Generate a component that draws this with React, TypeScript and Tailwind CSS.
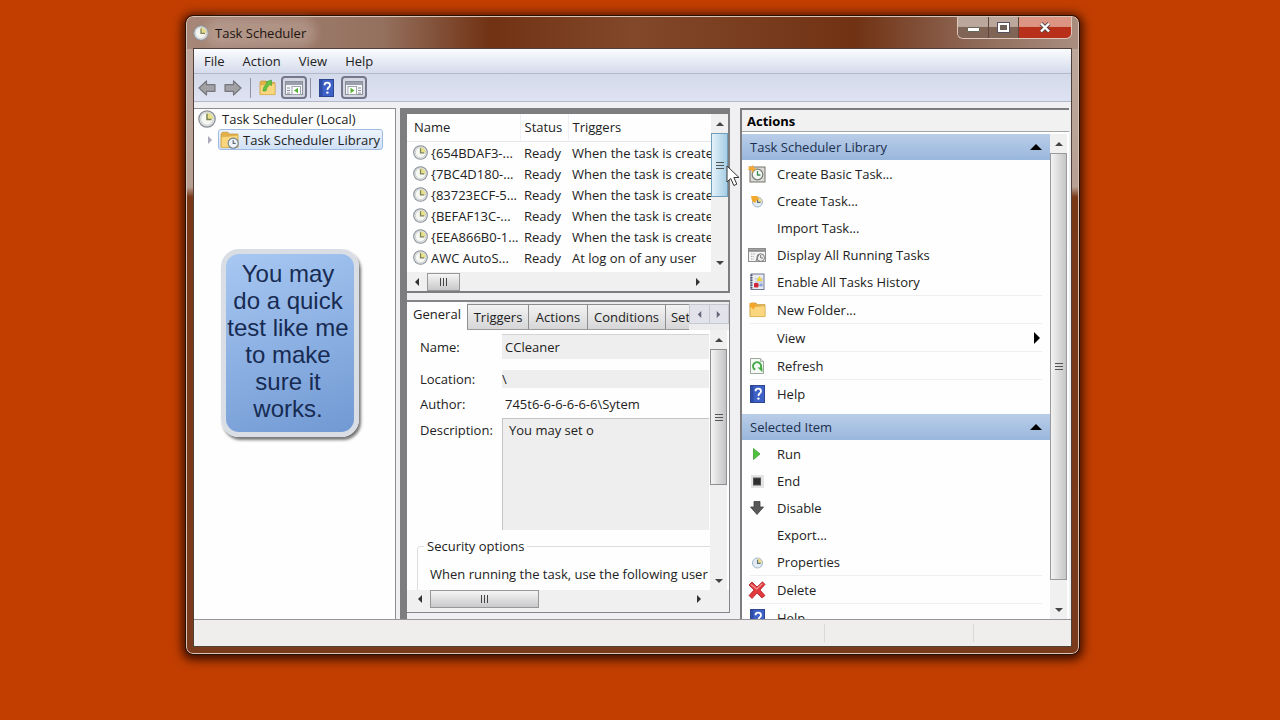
import React from "react";

type IconProps = { className?: string };

function ClockIcon({ className = "size-4" }: IconProps) {
  return (
    <svg viewBox="0 0 16 16" className={className} aria-hidden="true">
      <circle cx="8" cy="8" r="7.3" fill="#dfe3e6" stroke="#8a8f94" strokeWidth="1.1" />
      <circle cx="8" cy="8" r="5.5" fill="#f7f8f2" stroke="#bcc3c8" strokeWidth="0.6" />
      <path d="M8 8V2.5A5.5 5.5 0 0 1 13.5 8Z" fill="#e8e08a" />
      <path d="M8 3.4V8.4H12" fill="none" stroke="#7b8256" strokeWidth="1.3" />
    </svg>
  );
}

function SmallClockIcon({ className = "size-4", star = false }: IconProps & { star?: boolean }) {
  return (
    <svg viewBox="0 0 16 16" className={className} aria-hidden="true">
      <circle cx="8.5" cy="9" r="5" fill="#e3ecf5" stroke="#9fb2c6" />
      <path d="M8.5 9V4.6A4.4 4.4 0 0 1 12.9 9Z" fill="#eedb83" />
      <path d="M8.5 5.8V9.4H11.6" fill="none" stroke="#5c6f86" strokeWidth="1.1" />
      {star && <path d="M2 3h6l2 3-2 1-2 3-3-2Z" fill="#f2a92c" />}
    </svg>
  );
}

function BasicTaskIcon() {
  return (
    <svg viewBox="0 0 18 18" className="size-[18px]" aria-hidden="true">
      <rect x="2" y="2" width="15" height="15" fill="#dcdad5" stroke="#77736d" />
      <circle cx="9.5" cy="9.5" r="5.3" fill="#f4f7f4" stroke="#777f7c" strokeWidth="1.2" />
      <path d="M9.5 6V10H12.4" fill="none" stroke="#3f8c57" strokeWidth="1.3" />
      <path d="M0 1l3 1 2-2 1 3 3 1-3 1-1 3-2-3-3 0 1-2Z" fill="#f3a833" />
    </svg>
  );
}

function RunningTasksIcon() {
  return (
    <svg viewBox="0 0 18 16" className="h-4 w-[18px]" aria-hidden="true">
      <rect x="0.5" y="1.5" width="17" height="13" fill="#f4f4f4" stroke="#8d8d8d" />
      <path d="M1 3.5H17" stroke="#8d8d8d" strokeWidth="2.6" />
      <path d="M3 7h4M3 9.5h3M3 12h3" stroke="#aaa" strokeDasharray="1.4 1" />
      <circle cx="12.7" cy="10.6" r="3.8" fill="#f0f0f0" stroke="#777" />
      <path d="M12.7 8V11H15M8 14l3-7" fill="none" stroke="#777" />
    </svg>
  );
}

function HistoryIcon() {
  return (
    <svg viewBox="0 0 16 18" className="h-[18px] w-4" aria-hidden="true">
      <rect x="2" y="1" width="13" height="15.5" fill="#e9ebf3" stroke="#6f7793" />
      <path d="M2.5 1.5V16" stroke="#515873" strokeWidth="2" strokeDasharray="1.5 1" />
      <path d="M6 6h8M6 9h8M6 12h8" stroke="#b3b9cc" />
      <path d="M10.5 3l3 5h-6Z" fill="#ecd52f" />
      <rect x="5" y="10" width="4.5" height="4.5" rx="1" fill="#cf2637" />
      <rect x="10.5" y="10.5" width="3" height="3" fill="#8ca3d9" />
    </svg>
  );
}

function FolderIcon({ className = "size-[17px]", up = false, clock = false, star = false }: IconProps & { up?: boolean; clock?: boolean; star?: boolean }) {
  return (
    <svg viewBox="0 0 17 17" className={className} aria-hidden="true">
      <path d="M1 3.5 2 2h5l1.2 1.6H16V15.5H1Z" fill="#e3b04a" stroke="#c99a3b" strokeWidth="0.7" />
      <path d="M1.200 6.200 16 4.600V15.600H1.200Z" fill="#fad77e" stroke="#d9ae4b" strokeWidth="0.6" />
      {up && <path d="M4 12C4.200 8.500 5.500 6 8 4.800L6.800 3 12.500 1 12.600 6.600 10.900 5.600C8.500 7.500 7.500 9 7 12Z" fill="#62c441" stroke="#3c9a2b" strokeWidth="0.6" />}
      {star && <path d="M0 2l3 1 1.500-2 1 2.500 3 1-3 1.500-1 3-2-3-2.500-.5 1-1.500Z" fill="#f6a623" />}
      {clock && (
        <g>
          <circle cx="11.800" cy="11.800" r="4.500" fill="#eef3f7" stroke="#71808f" />
          <path d="M11.800 9V12H14" fill="none" stroke="#5a6672" />
        </g>
      )}
    </svg>
  );
}

function HelpIcon() {
  return (
    <svg viewBox="0 0 15 18" className="h-[18px] w-[15px]" aria-hidden="true">
      <rect x="0.5" y="0.5" width="14" height="17" fill="#3d61c6" stroke="#2c478f" />
      <path d="M1 1h2.500v16H1Z" fill="#2e4da6" />
      <path d="M5.500 6.200C5.500 2.800 11 2.800 11 6.200 11 8.400 8.400 8.200 8.400 11" fill="none" stroke="#fff" strokeWidth="1.800" />
      <circle cx="8.400" cy="13.600" r="1.200" fill="#fff" />
    </svg>
  );
}

function RefreshIcon() {
  return (
    <svg viewBox="0 0 16 18" className="h-[18px] w-4" aria-hidden="true">
      <path d="M1.500 1.500H11.500L14.500 4.500V16.500H1.500Z" fill="#f6faf6" stroke="#9aa79b" />
      <path d="M11.500 1.500V4.500H14.500" fill="#dfe7df" stroke="#9aa79b" strokeWidth="0.800" />
      <path d="M6.200 12.700A4 4 0 1 1 11.600 11" fill="none" stroke="#45a945" strokeWidth="2" />
      <path d="M8.600 10.600H13.400V15.200Z" fill="#45a945" />
    </svg>
  );
}

function PaneIcon({ flip = false }: { flip?: boolean }) {
  return (
    <svg viewBox="0 0 20 18" className="h-[18px] w-5" aria-hidden="true">
      <rect x="1.500" y="2.500" width="17" height="13" fill="#f4f5f7" stroke="#8b909b" />
      <path d="M2 4.500H18" stroke="#9a9fab" strokeWidth="3" />
      {flip ? (
        <g>
          <rect x="4" y="7.500" width="8.500" height="8" fill="#fff" stroke="#a0a6ae" />
          <path d="M6.500 8.800L10.500 11.500L6.500 14.200Z" fill="#56b137" />
          <path d="M14 9h3M14 11.500h3M14 14h3" stroke="#8b909b" />
        </g>
      ) : (
        <g>
          <rect x="8" y="7.500" width="8.500" height="8" fill="#fff" stroke="#a0a6ae" />
          <path d="M14 8.800L10 11.500L14 14.200Z" fill="#56b137" />
          <path d="M3 9h3M3 11.500h3M3 14h3" stroke="#8b909b" />
        </g>
      )}
    </svg>
  );
}

function NavArrow({ right = false }: { right?: boolean }) {
  return (
    <svg viewBox="0 0 18 16" className="h-4 w-[18px]" aria-hidden="true">
      <path
        d={right ? "M17 8 9.500 1V4.700H1V11.300H9.500V15Z" : "M1 8 8.500 1V4.700H17V11.300H8.500V15Z"}
        fill="#a2a2a6"
        stroke="#77777c"
        strokeWidth="1.200"
        strokeLinejoin="round"
      />
    </svg>
  );
}

function RunIcon() {
  return (
    <svg viewBox="0 0 16 16" className="size-4" aria-hidden="true">
      <path d="M4.500 2.500 11 8 4.500 13.500Z" fill="#4fc23e" stroke="#3ba02d" strokeWidth="0.800" />
    </svg>
  );
}

function EndIcon() {
  return (
    <svg viewBox="0 0 16 16" className="size-4" aria-hidden="true">
      <rect x="2" y="2" width="13" height="13" fill="#e4e4e4" />
      <rect x="4.500" y="5" width="7" height="7" fill="#2f2f2f" stroke="#555" />
    </svg>
  );
}

function DisableIcon() {
  return (
    <svg viewBox="0 0 16 16" className="size-4" aria-hidden="true">
      <path d="M5 1.500h6v5.500h3.500L8 14.500 1.500 7H5Z" fill="#585858" stroke="#3f3f3f" strokeWidth="0.800" />
    </svg>
  );
}

function DeleteIcon() {
  return (
    <svg viewBox="0 0 18 18" className="size-[18px]" aria-hidden="true">
      <path d="M1 4 4 1 9 6 14.500 .8 17 3.500 12 9 17 14.500 14 17 9 12 4 17.500 1 14.500 6 9Z" fill="#e03a3f" stroke="#b41f28" strokeWidth="0.800" />
      <path d="M3 3.500 8.800 8 14.500 2.600" fill="none" stroke="#f59a95" strokeWidth="1.200" />
    </svg>
  );
}

type Direction = "up" | "down" | "left" | "right";

const TRIANGLES: Record<Direction, string> = {
  up: "M0 6 4 2 8 6Z",
  down: "M0 2 4 6 8 2Z",
  left: "M6 0 2 4 6 8Z",
  right: "M2 0 6 4 2 8Z",
};

function Triangle({ to, className = "size-2" }: { to: Direction; className?: string }) {
  return (
    <svg viewBox="0 0 8 8" className={className} fill="currentColor" aria-hidden="true">
      <path d={TRIANGLES[to]} />
    </svg>
  );
}

function VerticalScroll({ thumb, label }: { thumb: string; label: string }) {
  return (
    <div className="flex w-[17px] shrink-0 flex-col items-stretch bg-[#f0f0f1] text-[#444]">
      <button aria-label={`${label} up`} className="flex h-[19px] shrink-0 items-center justify-center">
        <Triangle to="up" />
      </button>
      <div className="min-h-0 flex-1">
        <div className={`flex flex-col items-center justify-center gap-[2px] border ${thumb}`}>
          <span className="h-px w-2 bg-[#555]" />
          <span className="h-px w-2 bg-[#555]" />
          <span className="h-px w-2 bg-[#555]" />
        </div>
      </div>
      <button aria-label={`${label} down`} className="flex h-[19px] shrink-0 items-center justify-center">
        <Triangle to="down" />
      </button>
    </div>
  );
}

function HorizontalScroll({ thumb, label }: { thumb: string; label: string }) {
  return (
    <div className="flex h-[18px] min-w-0 flex-1 items-stretch text-[#333]">
      <button aria-label={`${label} left`} className="flex w-5 items-center justify-center">
        <Triangle to="left" />
      </button>
      <div className="flex flex-1">
        <div className={`flex items-center justify-center gap-[2px] border border-[#979797] bg-linear-to-b from-[#f5f5f5] to-[#c9c9cb] ${thumb}`}>
          <span className="h-2 w-px bg-[#444]" />
          <span className="h-2 w-px bg-[#444]" />
          <span className="h-2 w-px bg-[#444]" />
        </div>
      </div>
      <button aria-label={`${label} right`} className="flex w-5 items-center justify-center">
        <Triangle to="right" />
      </button>
    </div>
  );
}

const TASKS = [
  ["{654BDAF3-...", "Ready", "When the task is create"],
  ["{7BC4D180-...", "Ready", "When the task is create"],
  ["{83723ECF-5...", "Ready", "When the task is create"],
  ["{BEFAF13C-...", "Ready", "When the task is create"],
  ["{EEA866B0-1...", "Ready", "When the task is create"],
  ["AWC AutoS...", "Ready", "At log on of any user"],
];

type Action = { label: string; icon?: React.ReactNode; divided?: boolean; submenu?: boolean };

const LIBRARY_ACTIONS: Action[] = [
  { label: "Create Basic Task...", icon: <BasicTaskIcon /> },
  { label: "Create Task...", icon: <SmallClockIcon star /> },
  { label: "Import Task..." },
  { label: "Display All Running Tasks", icon: <RunningTasksIcon /> },
  { label: "Enable All Tasks History", icon: <HistoryIcon /> },
  { label: "New Folder...", icon: <FolderIcon star />, divided: true },
  { label: "View", divided: true, submenu: true },
  { label: "Refresh", icon: <RefreshIcon />, divided: true },
  { label: "Help", icon: <HelpIcon />, divided: true },
];

const ITEM_ACTIONS: Action[] = [
  { label: "Run", icon: <RunIcon /> },
  { label: "End", icon: <EndIcon /> },
  { label: "Disable", icon: <DisableIcon /> },
  { label: "Export..." },
  { label: "Properties", icon: <SmallClockIcon /> },
  { label: "Delete", icon: <DeleteIcon />, divided: true },
  { label: "Help", icon: <HelpIcon />, divided: true },
];

function ActionGroup({ title, actions }: { title: string; actions: Action[] }) {
  return (
    <section className="shrink-0">
      <h3 className="flex h-[26px] items-center justify-between bg-linear-to-b from-[#b9cde8] to-[#99b7dc] px-2 text-[#1c2f4e]">
        {title}
        <Triangle to="up" className="size-3 text-black" />
      </h3>
      <ul>
        {actions.map((a) => (
          <li key={a.label} className="px-1">
            <div className={a.divided ? "mx-1 border-t border-[#eeeeee]" : ""} />
            <button className="flex h-[27px] w-full items-center pr-[3px] text-left">
              <span className="flex w-[22px] justify-center">{a.icon}</span>
              <span className="flex-1 pl-[9px]">{a.label}</span>
              {a.submenu && <Triangle to="right" className="size-3 text-black" />}
            </button>
          </li>
        ))}
      </ul>
    </section>
  );
}

function TitleBar() {
  return (
    <header className="flex h-[31px] shrink-0 items-start justify-between">
      <h1 className="flex h-[31px] items-center gap-[2px]">
        <ClockIcon />
        <span className="rounded-full bg-[#c9b5aa]/40 px-1 text-[#1d1410] shadow-[0_0_8px_6px_rgba(201,181,170,0.4)]">Task Scheduler</span>
      </h1>
      <div className="flex h-[22px] overflow-hidden rounded-b-md border border-t-0 border-[#dcc8bd]">
        <button aria-label="Minimize" className="flex w-[31px] items-center justify-center border-r border-[#5d473c] bg-linear-to-b from-[#bba79c] from-45% to-[#806455] to-50%">
          <span className="mt-1 h-[5px] w-[13px] rounded-[1px] border border-[#666655] bg-white" />
        </button>
        <button aria-label="Maximize" className="flex w-[30px] items-center justify-center border-r border-[#5d473c] bg-linear-to-b from-[#bba79c] from-45% to-[#806455] to-50%">
          <span className="h-[9px] w-[11px] border-2 border-white bg-[#70605a] outline outline-[#554f60]" />
        </button>
        <button aria-label="Close" className="flex w-[52px] items-center justify-center bg-linear-to-b from-[#dd9583] from-45% to-[#b8301a] to-50%">
          <svg viewBox="0 0 12 11" className="h-[11px] w-3" aria-hidden="true">
            <path d="M2 1.500 10 9.500M10 1.500 2 9.500" stroke="#5a4646" strokeWidth="4" />
            <path d="M2 1.500 10 9.500M10 1.500 2 9.500" stroke="#fff" strokeWidth="2.400" />
          </svg>
        </button>
      </div>
    </header>
  );
}

function Toolbar() {
  const toggled = "flex h-[23px] w-[26px] items-center justify-center rounded-[4px] border-2 border-[#74788a] bg-[#d3d7e2]";
  return (
    <div className="flex h-[28px] shrink-0 items-center border-b border-[#b4b9c8] bg-linear-to-b from-[#d3daea] to-[#dfe3f3] pl-1">
      <button aria-label="Back"><NavArrow /></button>
      <button aria-label="Forward" className="ml-2"><NavArrow right /></button>
      <span className="ml-2 h-5 w-px bg-[#8f94a4]" />
      <button aria-label="Up one level" className="ml-2"><FolderIcon up /></button>
      <button aria-label="Show console tree" className={`${toggled} ml-[5px]`}><PaneIcon /></button>
      <span className="ml-[3px] h-5 w-px bg-[#8f94a4]" />
      <button aria-label="Help" className="ml-2"><HelpIcon /></button>
      <button aria-label="Show action pane" className={`${toggled} ml-[7px]`}><PaneIcon flip /></button>
    </div>
  );
}

function TreePane() {
  return (
    <nav className="relative w-[202px] shrink-0 border-t border-r border-[#8b8d92] bg-[#fefefe]" aria-label="Console tree">
      <button className="flex h-[20px] items-center gap-[6px] pl-1">
        <ClockIcon className="size-[18px]" />
        Task Scheduler (Local)
      </button>
      <div className="flex items-center pl-3">
        <Triangle to="right" className="size-2 text-[#aaaabb]" />
        <button className="ml-1 flex h-[21px] items-center gap-1 rounded-[3px] border border-[#9dbbe3] bg-linear-to-b from-[#eef4fc] to-[#cfe0f7] pr-[2px] pl-px">
          <FolderIcon clock className="size-[19px]" />
          Task Scheduler Library
        </button>
      </div>
      <p className="absolute top-[140px] left-[27px] flex h-[188px] w-[138px] flex-col items-center justify-center rounded-[18px] border-[5px] border-[#d9dde4] bg-linear-160 from-[#a8c8f2] to-[#7199d3] pr-1 pb-[5px] font-['Liberation_Sans',Arial,sans-serif] text-[24px] leading-[27px] whitespace-nowrap text-[#172b52] shadow-[2px_3px_3px_#777777]">
        <span>You may</span>
        <span>do a quick</span>
        <span>test like me</span>
        <span>to make</span>
        <span>sure it</span>
        <span>works.</span>
      </p>
    </nav>
  );
}

function TaskList() {
  return (
    <section className="shrink-0 border-t-[6px] border-r-2 border-b-2 border-[#7d7d7f] bg-[#f0f0f1]">
      <div className="flex h-[158px] bg-[#fefefe]">
        <div className="min-w-0 flex-1 overflow-hidden">
          <table className="w-full table-fixed text-left whitespace-nowrap">
            <thead>
              <tr className="h-[27px] border-b border-[#e4e8ec]">
                <th className="w-[113px] pl-[7px] font-normal">Name</th>
                <th className="w-[48px] border-l border-[#eef0f3] pl-1 font-normal">Status</th>
                <th className="border-l border-[#eef0f3] pl-1 font-normal">Triggers</th>
              </tr>
            </thead>
            <tbody>
              <tr className="h-px"><td colSpan={3} /></tr>
              {TASKS.map(([name, status, trigger]) => (
                <tr key={name} className="h-[21px]">
                  <td className="pl-[6px]">
                    <span className="flex items-center gap-[3px]">
                      <ClockIcon className="size-[15px] shrink-0" />
                      {name}
                    </span>
                  </td>
                  <td className="pl-1">{status}</td>
                  <td className="pl-1">{trigger}</td>
                </tr>
              ))}
            </tbody>
          </table>
        </div>
        <VerticalScroll label="Scroll tasks" thumb="h-[64px] border-[#6f9dba] bg-linear-to-r from-[#e4f2fa] to-[#a5cde4]" />
      </div>
      <div className="flex h-[19px] items-center pr-5">
        <HorizontalScroll label="Scroll tasks" thumb="w-[33px]" />
      </div>
    </section>
  );
}

const TABS = [
  { label: "Triggers", width: "w-[61px]" },
  { label: "Actions", width: "w-[59px]" },
  { label: "Conditions", width: "w-[78px]" },
  { label: "Set", width: "w-[30px]" },
];

function DetailsPane() {
  const label = "w-[82px] shrink-0";
  const field = "h-full min-w-0 flex-1 bg-[#eeeeee] outline-none";
  return (
    <section className="mt-[7px] mb-[6px] flex min-h-0 flex-1 flex-col border-t-2 border-r border-b border-[#858587] bg-[#fefefe]">
      <div className="flex h-[28px] shrink-0 bg-[#ececee]" role="tablist">
        <button role="tab" aria-selected="true" className="w-[60px] shrink-0 bg-[#fefefe] pb-1">General</button>
        <div className="mt-[2px] flex min-w-0 flex-1 overflow-hidden border-b border-[#9a9a9c]">
          {TABS.map((t) => (
            <button key={t.label} role="tab" aria-selected="false" className={`shrink-0 border-t border-l border-[#8e8e91] bg-linear-to-b from-[#f3f3f3] to-[#d6d6d8] ${t.width}`}>
              {t.label}
            </button>
          ))}
        </div>
        <div className="mt-[2px] flex h-[20px] w-10 shrink-0 bg-[#e1e2ea] text-[#666677]">
          <button aria-label="Previous tabs" className="flex flex-1 items-center justify-center border border-[#c6c8d0]"><Triangle to="left" className="size-[7px]" /></button>
          <button aria-label="More tabs" className="flex flex-1 items-center justify-center border border-l-0 border-[#c6c8d0]"><Triangle to="right" className="size-[7px]" /></button>
        </div>
      </div>
      <div className="flex min-h-0 flex-1 pr-[2px]">
        <div className="flex min-w-0 flex-1 flex-col overflow-hidden pt-1 pr-px">
          <div className="flex h-[25px] shrink-0 items-center pl-[13px]">
            <label htmlFor="task-name" className={label}>Name:</label>
            <input id="task-name" readOnly value="CCleaner" className={`${field} border-t border-[#d5d5d5] pl-[3px]`} />
          </div>
          <div className="mt-[11px] flex h-[18px] shrink-0 items-center pl-[13px]">
            <label htmlFor="task-location" className={label}>Location:</label>
            <input id="task-location" readOnly value="\" className={field} />
          </div>
          <div className="mt-[7px] flex h-[18px] shrink-0 items-center pl-[13px]">
            <label htmlFor="task-author" className={label}>Author:</label>
            <input id="task-author" readOnly value="745t6-6-6-6-6-6\Sytem" className="min-w-0 flex-1 pl-[3px] outline-none" />
          </div>
          <div className="mt-[5px] flex h-[112px] shrink-0 items-start pl-[13px]">
            <label htmlFor="task-description" className={`${label} pt-[3px]`}>Description:</label>
            <textarea id="task-description" readOnly value="You may set o" className={`${field} resize-none border-t border-l border-[#c4c4c4] pt-[2px] pl-[6px]`} />
          </div>
          <fieldset className="mt-[7px] -mr-4 ml-[10px] min-h-[60px] rounded-[3px] border border-[#dddddd] px-3">
            <legend className="-ml-[6px] px-[3px]">Security options</legend>
            <p className="pt-[10px] whitespace-nowrap">When running the task, use the following user</p>
          </fieldset>
        </div>
        <VerticalScroll label="Scroll details" thumb="h-[136px] border-[#8f8f92] bg-linear-to-r from-[#f5f5f5] to-[#c3c3c6]" />
      </div>
      <div className="flex h-[22px] shrink-0 items-start bg-[#f0f0f1] pr-5 pl-[3px]">
        <HorizontalScroll label="Scroll details" thumb="w-[109px]" />
      </div>
    </section>
  );
}

function ActionsPane() {
  return (
    <aside className="mr-[2px] flex w-[329px] shrink-0 flex-col border-t-2 border-l-2 border-[#7d7d7f] bg-[#fefefe]">
      <h2 className="h-[22px] shrink-0 border-b border-[#a5a5a8] bg-[#f2f1f2] pt-[2px] pl-[5px] font-bold text-black">Actions</h2>
      <div className="flex min-h-0 flex-1 pt-[2px]">
        <div className="flex min-w-0 flex-1 flex-col gap-[7px] overflow-hidden">
          <ActionGroup title="Task Scheduler Library" actions={LIBRARY_ACTIONS} />
          <ActionGroup title="Selected Item" actions={ITEM_ACTIONS} />
        </div>
        <div className="flex pr-[2px]">
          <VerticalScroll label="Scroll actions" thumb="h-[427px] border-[#9a9a9d] bg-linear-to-r from-[#f3f3f3] to-[#c6c6c8]" />
        </div>
      </div>
    </aside>
  );
}

export default function App() {
  return (
    <div className="flex h-screen overflow-hidden bg-[#c13e00] pt-4 pr-[201px] pb-[66px] pl-[186px] font-['Open_Sans','Noto_Sans',sans-serif] text-[13px] leading-[18px] text-[#222222]">
      <main className="flex min-w-0 flex-1 flex-col rounded-[7px] border border-[#d9c3b7] bg-[linear-gradient(180deg,transparent_32px,#bda79c_32px,#b79f93_170px,#7a3817_180px,#7a3b1c_100%),linear-gradient(90deg,#a68778_0%,#94705e_22%,#713213_34%,#82482a_50%,#713213_75%,#8d6755_88%,#a98e80_100%)] px-[6px] pb-[6px] shadow-[0_2px_10px_4px_rgba(20,0,0,0.75)] outline outline-[#2a0f05]">
        <TitleBar />
        <div className="flex min-h-0 flex-1 flex-col border border-[#4f403a] bg-[#f0f0f3]">
          <nav className="flex h-[25px] shrink-0 items-center gap-[18px] border-b border-[#b4b9c8] bg-linear-to-b from-[#fbfcfe] to-[#d5dbec] pl-[10px]" aria-label="Menu">
            <button>File</button>
            <button>Action</button>
            <button>View</button>
            <button>Help</button>
          </nav>
          <Toolbar />
          <div className="flex min-h-0 flex-1 pt-[6px]">
            <TreePane />
            <div className="relative ml-1 flex min-w-0 flex-1 flex-col border-l-[7px] border-[#7d7d7f] pr-[10px]">
              <TaskList />
              <DetailsPane />
              <svg viewBox="0 0 14 22" className="absolute top-[57px] right-0 h-[22px] w-[14px]" aria-hidden="true">
                <path d="M1 1V17L4.800 13.500 7.800 20.500 10.800 19.200 7.900 12.500H13Z" fill="#fff" stroke="#333" />
              </svg>
            </div>
            <ActionsPane />
          </div>
          <footer className="flex h-[27px] shrink-0 border-t border-[#97979b] bg-[#f0eded]">
            <span className="flex-1" />
            <span className="my-1 w-[149px] border-l border-[#dcd8d8]" />
            <span className="my-1 w-[98px] border-l border-[#dcd8d8]" />
          </footer>
        </div>
      </main>
    </div>
  );
}
